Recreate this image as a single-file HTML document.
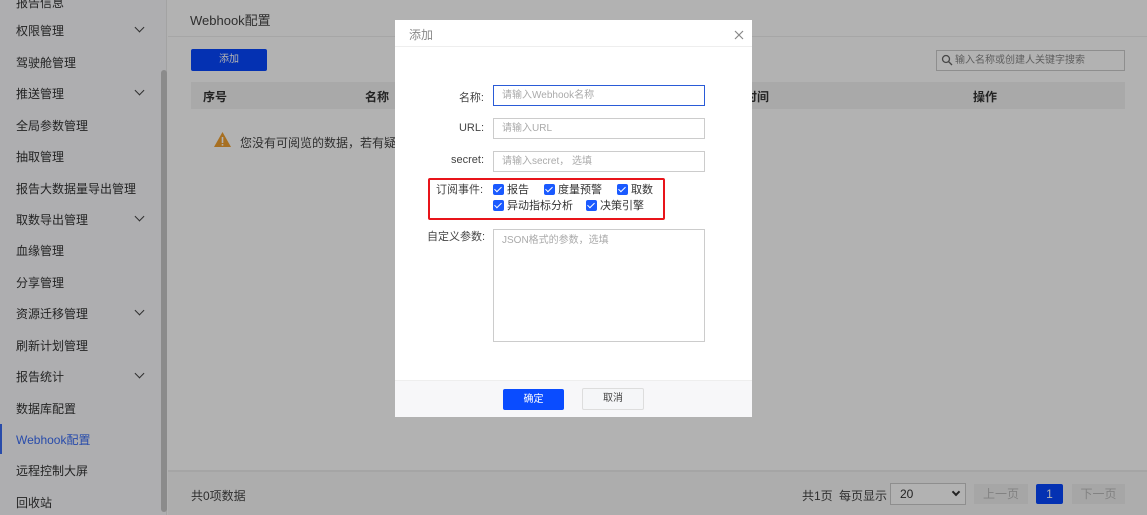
<!DOCTYPE html>
<html><head><meta charset="utf-8"><style>
*{margin:0;padding:0;box-sizing:border-box}
body{width:1147px;height:515px;overflow:hidden;position:relative;background:#fff;font-family:"Liberation Sans","Noto Sans CJK SC",sans-serif;font-size:12px;color:#333}
.side{position:absolute;left:0;top:0;width:167px;height:515px;background:#f9fafd;border-right:1px solid #eaeaea}
.side div{position:absolute;left:16px;font-size:12px;color:#333}
.chev{position:absolute;left:136px;width:7px;height:7px;border-right:1.5px solid #444;border-bottom:1.5px solid #444;transform:rotate(45deg)}
.scroll{position:absolute;left:161px;top:70px;width:6px;height:442px;background:#c8c8c8;border-radius:3px}
.abs{position:absolute}
.top{position:absolute;left:168px;top:0;right:0;height:37px;border-bottom:1px solid #eee;background:#fff}
.mask{position:absolute;left:0;top:0;width:1147px;height:515px;background:rgba(0,0,0,0.3)}
.modal{position:absolute;left:395px;top:20px;width:357px;height:397px;background:#fff;border-radius:2px}
.inp{position:absolute;left:98px;width:212px;height:21px;border:1px solid #ccc;font-size:10px;color:#aaa;padding-left:8px;line-height:19px}
.lab{position:absolute;right:268px;font-size:11px;color:#444}
.cb{display:inline-block;width:11px;height:11px;background:#1a5aff;border-radius:2px;vertical-align:-2px;margin-right:3px;position:relative}
.cb:after{content:"";position:absolute;left:3px;top:1px;width:3px;height:6px;border-right:1.3px solid #fff;border-bottom:1.3px solid #fff;transform:rotate(45deg)}
</style></head><body>
<div class="side">
<div style="top:-6px">报告信息</div>
<div style="top:22px">权限管理</div><span class="chev" style="top:24px"></span>
<div style="top:54px">驾驶舱管理</div>
<div style="top:85px">推送管理</div><span class="chev" style="top:87px"></span>
<div style="top:117px">全局参数管理</div>
<div style="top:148px">抽取管理</div>
<div style="top:180px">报告大数据量导出管理</div>
<div style="top:211px">取数导出管理</div><span class="chev" style="top:213px"></span>
<div style="top:242px">血缘管理</div>
<div style="top:274px">分享管理</div>
<div style="top:305px">资源迁移管理</div><span class="chev" style="top:307px"></span>
<div style="top:337px">刷新计划管理</div>
<div style="top:368px">报告统计</div><span class="chev" style="top:370px"></span>
<div style="top:400px">数据库配置</div>
<div style="top:431px;color:#3a6cf4">Webhook配置</div>
<span class="abs" style="left:0;top:424px;width:2px;height:30px;background:#3a6cf4"></span>
<div style="top:462px">远程控制大屏</div>
<div style="top:494px">回收站</div>
<span class="scroll"></span>
</div>
<div class="top"><span class="abs" style="left:22px;top:10px;font-size:13px;color:#444">Webhook配置</span></div>
<div class="abs" style="left:191px;top:49px;width:76px;height:22px;background:#0647ff;border-radius:2px;color:#fff;font-size:10px;text-align:center;line-height:22px">添加</div>
<div class="abs" style="left:936px;top:50px;width:189px;height:21px;border:1px solid #ccc;font-size:10px;color:#888;line-height:19px;padding-left:18px">输入名称或创建人关键字搜索
<svg class="abs" style="left:4px;top:3px" width="12" height="12"><circle cx="5" cy="5" r="3.5" fill="none" stroke="#666" stroke-width="1.3"/><path d="M7.5 7.5L11 11" stroke="#666" stroke-width="1.3"/></svg></div>
<div class="abs" style="left:191px;top:82px;width:934px;height:27px;background:#f3f3f3"></div>
<span class="abs" style="left:203px;top:88px;font-weight:bold;color:#333">序号</span>
<span class="abs" style="left:365px;top:88px;font-weight:bold;color:#333">名称</span>
<span class="abs" style="left:745px;top:88px;font-weight:bold;color:#333">时间</span>
<span class="abs" style="left:973px;top:88px;font-weight:bold;color:#333">操作</span>
<svg class="abs" style="left:213px;top:131px" width="19" height="17"><path d="M9.5 1L18 16H1Z" fill="#f0a030"/><rect x="8.7" y="6" width="1.6" height="6" fill="#fff"/><rect x="8.7" y="13" width="1.6" height="1.6" fill="#fff"/></svg>
<span class="abs" style="left:240px;top:134px;color:#444">您没有可阅览的数据，若有疑问，</span>
<div class="abs" style="left:168px;top:470px;right:0;height:45px;border-top:2px solid #ececec;background:#f8f8f8"></div>
<span class="abs" style="left:191px;top:487px;color:#444">共0项数据</span>
<span class="abs" style="left:802px;top:487px;color:#444">共1页</span>
<span class="abs" style="left:839px;top:487px;color:#444">每页显示</span>
<div class="abs" style="left:890px;top:483px;width:76px;height:22px;border:1px solid #ccc;padding-left:9px;line-height:20px;color:#333;background:#fff">20<span class="abs" style="right:6px;top:5px;width:6px;height:6px;border-right:2px solid #333;border-bottom:2px solid #333;transform:rotate(45deg)"></span></div>
<div class="abs" style="left:974px;top:484px;width:54px;height:20px;background:#eee;color:#bbb;text-align:center;line-height:20px">上一页</div>
<div class="abs" style="left:1036px;top:484px;width:27px;height:20px;background:#0647ff;color:#fff;text-align:center;line-height:20px;border-radius:2px">1</div>
<div class="abs" style="left:1072px;top:484px;width:53px;height:20px;background:#eee;color:#bbb;text-align:center;line-height:20px">下一页</div>
<div class="mask"></div>

<div class="modal">
<div class="abs" style="left:0;top:0;width:357px;height:27px;border-bottom:1px solid #eee;background:#fff"></div>
<span class="abs" style="left:14px;top:6px;color:#888;font-size:12px">添加</span>
<svg class="abs" style="left:339px;top:10px" width="10" height="10"><path d="M1 1L9 9M9 1L1 9" stroke="#888" stroke-width="1.2"/></svg>
<span class="lab" style="top:69px">名称:</span>
<div class="inp" style="top:65px;border-color:#2a5bd7">请输入Webhook名称</div>
<span class="lab" style="top:102px">URL:</span>
<div class="inp" style="top:98px">请输入URL</div>
<span class="lab" style="top:134px">secret:</span>
<div class="inp" style="top:131px">请输入secret， 选填</div>
<div class="abs" style="left:33px;top:158px;width:237px;height:42px;border:2px solid #e8141a;border-radius:2px"></div>
<span class="abs" style="left:41px;top:161px;font-size:11px;color:#444">订阅事件:</span>
<span class="abs" style="left:98px;top:161px;font-size:11px;color:#333"><i class="cb"></i>报告</span>
<span class="abs" style="left:149px;top:161px;font-size:11px;color:#333"><i class="cb"></i>度量预警</span>
<span class="abs" style="left:222px;top:161px;font-size:11px;color:#333"><i class="cb"></i>取数</span>
<span class="abs" style="left:98px;top:177px;font-size:11px;color:#333"><i class="cb"></i>异动指标分析</span>
<span class="abs" style="left:191px;top:177px;font-size:11px;color:#333"><i class="cb"></i>决策引擎</span>
<span class="abs" style="left:32px;top:208px;font-size:11px;color:#444">自定义参数:</span>
<div class="inp" style="top:209px;height:113px;line-height:21px">JSON格式的参数，选填</div>
<div class="abs" style="left:0;top:360px;width:357px;height:37px;background:#f7f7f9;border-top:1px solid #eee"></div>
<div class="abs" style="left:108px;top:369px;width:61px;height:21px;background:#0a4cff;border-radius:2px;color:#fff;font-size:10px;text-align:center;line-height:21px">确定</div>
<div class="abs" style="left:187px;top:368px;width:62px;height:22px;background:#f5f6f8;border:1px solid #ddd;border-radius:2px;color:#444;font-size:10px;text-align:center;line-height:20px">取消</div>
</div>
</body></html>
